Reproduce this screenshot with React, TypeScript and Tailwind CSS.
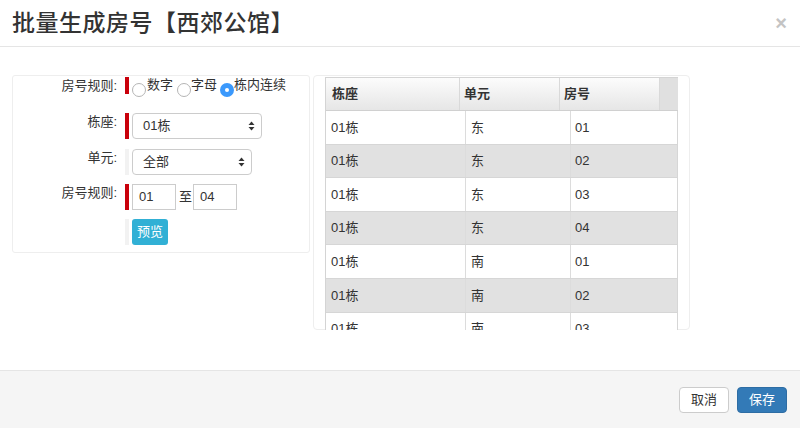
import React from 'react';

const rows = [
  ['01栋', '东', '01'],
  ['01栋', '东', '02'],
  ['01栋', '东', '03'],
  ['01栋', '东', '04'],
  ['01栋', '南', '01'],
  ['01栋', '南', '02'],
  ['01栋', '南', '03'],
];

function SelectArrows() {
  return (
    <svg width="7" height="11" viewBox="0 0 7 11" className="absolute right-[6px] top-1/2 -translate-y-1/2">
      <path d="M3.5 1 L6.5 4.5 L0.5 4.5 Z" fill="#333" />
      <path d="M3.5 10 L6.5 6.5 L0.5 6.5 Z" fill="#333" />
    </svg>
  );
}

function Radio({ checked }: { checked?: boolean }) {
  return checked ? (
    <span className="mt-[6px] flex h-[14px] w-[14px] shrink-0 items-center justify-center rounded-full bg-[#3b99fc]">
      <span className="h-[4px] w-[4px] rounded-full bg-white" />
    </span>
  ) : (
    <span className="mt-[6px] block h-[14px] w-[14px] shrink-0 rounded-full border border-[#b5b5b5] bg-white" />
  );
}

function Row({ label, mark, children, className }: { label?: string; mark: 'red' | 'gray'; children: React.ReactNode; className?: string }) {
  return (
    <div className={`flex items-start ${className ?? ''}`}>
      <div className="w-[104px] text-right text-[13px] leading-[18px] text-[#333]">{label}</div>
      <div className={`ml-[8px] w-[4px] self-stretch ${mark === 'red' ? 'bg-[#c9000b]' : 'bg-[#f2f2f2]'}`} />
      <div className="ml-[3px] flex items-start">{children}</div>
    </div>
  );
}

export default function App() {
  return (
    <div
      className="flex h-[428px] w-[800px] flex-col bg-white text-[#333]"
      style={{ fontFamily: '"Helvetica Neue", "Liberation Sans", "Noto Sans CJK SC", sans-serif' }}
    >
      <header className="flex h-[47px] shrink-0 items-center justify-between border-b border-[#e5e5e5] pl-[12px] pr-[13px]">
        <h1 className="text-[23px] font-medium leading-none tracking-[0.5px] text-[#333]">批量生成房号【西郊公馆】</h1>
        <span className="text-[20px] font-bold leading-none text-[#c4c4c4]">×</span>
      </header>

      <main className="flex flex-1 items-start pl-[12px] pt-[28px]">
        <section className="flex h-[178px] w-[298px] flex-col rounded-[3px] border border-[#eee] pt-[1px]">
          <Row label="房号规则:" mark="red" className="h-[17px]">
            <div className="flex items-start text-[13px] leading-[16px] text-[#333]">
              <Radio />
              <span className="ml-[1px]">数字</span>
              <span className="ml-[4px] flex"><Radio /></span>
              <span>字母</span>
              <span className="ml-[3px] flex"><Radio checked /></span>
              <span>栋内连续</span>
            </div>
          </Row>

          <Row label="栋座:" mark="red" className="mt-[19px] pt-0">
            <div className="relative flex h-[26px] w-[130px] items-center rounded-[4px] border border-[#ccc] bg-white pl-[10px] text-[13px] text-[#333]">
              01栋
              <SelectArrows />
            </div>
          </Row>

          <Row label="单元:" mark="gray" className="mt-[10px]">
            <div className="relative flex h-[26px] w-[120px] items-center rounded-[4px] border border-[#ccc] bg-white pl-[10px] text-[13px] text-[#333]">
              全部
              <SelectArrows />
            </div>
          </Row>

          <Row label="房号规则:" mark="red" className="mt-[9px]">
            <div className="flex items-center text-[13px]">
              <div className="flex h-[26px] w-[44px] items-center border border-[#ccc] pl-[6px]">01</div>
              <span className="ml-[3px] mr-[1px]">至</span>
              <div className="flex h-[26px] w-[44px] items-center border border-[#ccc] pl-[6px]">04</div>
            </div>
          </Row>

          <Row mark="gray" className="mt-[9px]">
            <div className="flex h-[26px] w-[36px] items-center justify-center rounded-[3px] bg-[#31b0d5] text-[13px] text-white">
              预览
            </div>
          </Row>
        </section>

        <section className="ml-[3px] h-[255px] w-[377px] rounded-[4px] border border-[#eee] pl-[11px] pt-[1px]">
          <div className="h-[253px] w-[353px] overflow-hidden border-l border-t border-[#d4d4d4] text-[13px] text-[#333]">
            <div className="flex h-[33px] border-b border-[#d0d0d0] bg-gradient-to-b from-[#fcfcfc] to-[#e6e6e6] font-bold">
              <div className="flex w-[134px] items-center border-r border-[#d9d9d9] pl-[6px]">栋座</div>
              <div className="flex w-[100px] items-center border-r border-[#d9d9d9] pl-[4px]">单元</div>
              <div className="flex w-[100px] items-center border-r border-[#d9d9d9] pl-[4px]">房号</div>
              <div className="flex-1 bg-[#e0e0e0]" />
            </div>
            {rows.map((r, i) => (
              <div
                key={i}
                className={`flex h-[33.6px] w-[352px] border-b border-r border-[#d6d6d6] ${i % 2 === 1 ? 'bg-[#e1e1e1]' : 'bg-white'}`}
              >
                <div className="flex w-[140px] items-center border-r border-[#dcdcdc] pl-[5px]">{r[0]}</div>
                <div className="flex w-[105px] items-center border-r border-[#dcdcdc] pl-[5px]">{r[1]}</div>
                <div className="flex flex-1 items-center pl-[4px]">{r[2]}</div>
              </div>
            ))}
          </div>
        </section>
      </main>

      <footer className="flex h-[58px] shrink-0 items-center justify-end gap-[8px] border-t border-[#e5e5e5] bg-[#f5f5f5] pr-[13px]">
        <button className="h-[26px] w-[50px] rounded-[4px] border border-[#ccc] bg-white text-[13px] text-[#333]">取消</button>
        <button className="h-[26px] w-[50px] rounded-[4px] border border-[#2e6da4] bg-[#337ab7] text-[13px] text-white">保存</button>
      </footer>
    </div>
  );
}
